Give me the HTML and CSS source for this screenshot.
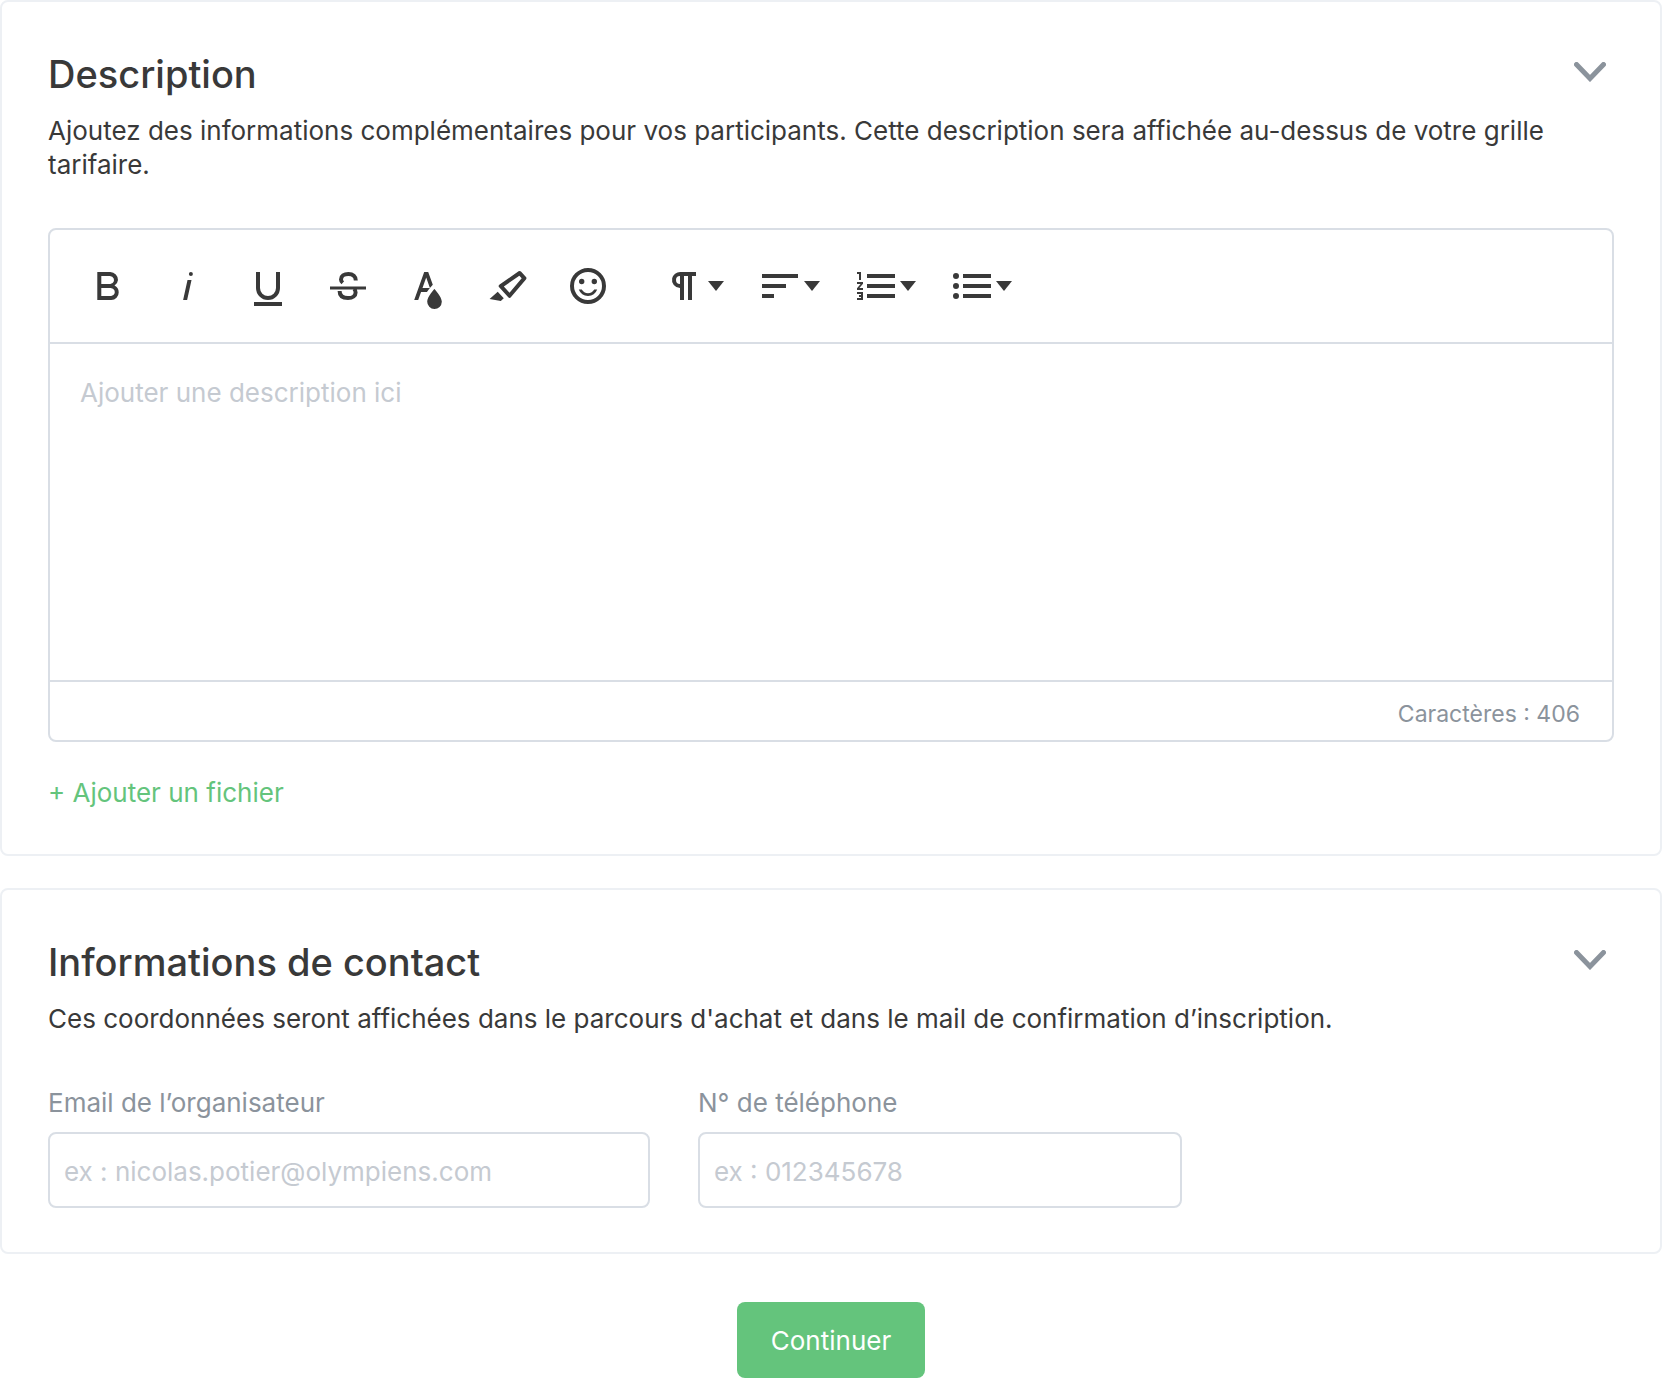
FILE: index.html
```html
<!DOCTYPE html>
<html lang="fr">
<head>
    <meta charset="UTF-8">
    <meta name="viewport" content="width=device-width, initial-scale=1.0">
    <title>Description et contact</title>
    <link rel="stylesheet" href="styles.css">
</head>
<body>
<form>
    <!-- Description -->
    <section class="card">
        <div class="card-header">
            <h2>Description</h2>
            <button type="button" class="toggle-btn" aria-label="Replier la description">
                <svg viewBox="0 0 32 20"><path d="M2.5 2.5 16 16.5 29.5 2.5"/></svg>
            </button>
        </div>
        <p class="intro">Ajoutez des informations complémentaires pour vos participants. Cette description sera affichée au-dessus de votre grille tarifaire.</p>

        <div class="editor">
            <div class="toolbar">
                <div class="btn-group">
                    <button type="button" aria-label="Gras">
                        <svg class="icon" viewBox="0 0 24 24"><path d="M15.25,11.8h0A3.68,3.68,0,0,0,17,9a3.93,3.93,0,0,0-3.86-4H6.65V19h7a3.74,3.74,0,0,0,3.7-3.78V15.1A3.64,3.64,0,0,0,15.25,11.8ZM8.65,7h4.2a2.09,2.09,0,0,1,2,1.3,2.09,2.09,0,0,1-1.37,2.61,2.23,2.23,0,0,1-.63.09H8.65Zm4.6,10H8.65V13h4.6a2.09,2.09,0,0,1,2,1.3,2.09,2.09,0,0,1-1.37,2.61A2.23,2.23,0,0,1,13.25,17Z"/></svg>
                    </button>
                    <button type="button" aria-label="Italique">
                        <svg class="icon" viewBox="0 0 24 24"><path d="M11.76,9h2l-2.2,10h-2Zm1.68-4a1,1,0,1,0,1,1,1,1,0,0,0-1-1Z"/></svg>
                    </button>
                    <button type="button" aria-label="Souligné">
                        <svg class="icon" viewBox="0 0 24 24"><path d="M5 20h14v2H5Z"/><path class="line" d="M7 5v8a5 5 0 0 0 10 0V5"/></svg>
                    </button>
                    <button type="button" aria-label="Barré">
                        <svg class="icon" viewBox="0 0 24 24"><path d="M3 12.2h18v1.5H3Z"/><path class="line" d="M9.4 10.4C8.7 9.8 8.5 9.2 8.5 8.7 8.5 7 10 6 12.2 6c2.3 0 3.7 1.3 3.7 3.3M7.8 14.5C7.8 16.8 9.4 18 12 18c2.4 0 3.8-1.1 3.8-2.8 0-.8-.2-1.4-.8-1.9"/></svg>
                    </button>
                    <button type="button" aria-label="Couleur du texte">
                        <svg class="icon" viewBox="0 0 24 24"><path d="M15.2,13.494s-3.6,3.9-3.6,6.3a3.65,3.65,0,0,0,7.3.1v-.1C18.9,17.394,15.2,13.494,15.2,13.494Zm-1.47-1.357.669-.724L12.1,5h-2l-5,14h2l1.43-4h2.943A24.426,24.426,0,0,1,13.726,12.137ZM11.1,7.8l1.86,5.2H9.244Z"/></svg>
                    </button>
                    <button type="button" aria-label="Couleur de fond">
                        <svg class="icon" viewBox="0 0 24 24"><path d="M9.918,12.241l7.748-5.39,1.179,1.296-6.094,7.207L9.918,12.241M7.587,12.652l4.536,4.983a.934.934,0,0,0,1.395-.091L20.969,8.731A.908.908,0,0,0,20.991,7.533l-2.513-2.761a.908.908,0,0,0-1.195-.091L7.809,11.271A.934.934,0,0,0,7.587,12.652ZM2.794,18.528,8.411,19.5l1.479-1.346-3.029-3.328Z"/></svg>
                    </button>
                    <button type="button" aria-label="Émoticônes">
                        <svg class="icon" viewBox="0 0 24 24"><path d="M11.991,3A9,9,0,1,0,21,12,8.996,8.996,0,0,0,11.991,3ZM12,19a7,7,0,1,1,7-7A6.998,6.998,0,0,1,12,19Zm3.105-5.2h1.503a4.945,4.945,0,0,1-9.216,0H8.895a3.578,3.578,0,0,0,6.21,0ZM7.5,9.75A1.35,1.35,0,1,1,8.85,11.1,1.35,1.35,0,0,1,7.5,9.75Zm6.3,0a1.35,1.35,0,1,1,1.35,1.35A1.35,1.35,0,0,1,13.8,9.75Z"/></svg>
                    </button>
                </div>
                <div class="btn-group">
                    <button type="button" class="dropdown" aria-label="Format de paragraphe">
                        <svg class="icon" viewBox="0 0 24 24"><path d="M10.15,5A4.11,4.11,0,0,0,6.08,8.18,4,4,0,0,0,10,13v6h2V7h2V19h2V7h2V5ZM8,9a2,2,0,0,1,2-2v4A2,2,0,0,1,8,9Z"/></svg>
                        <svg class="caret" viewBox="0 0 16 10"><path d="M0 0h16L8 10Z"/></svg>
                    </button>
                    <button type="button" class="dropdown" aria-label="Alignement">
                        <svg class="icon" viewBox="0 0 24 24"><path d="M3 6h18v2H3ZM3 11h12v2H3ZM3 16h6v2H3Z"/></svg>
                        <svg class="caret" viewBox="0 0 16 10"><path d="M0 0h16L8 10Z"/></svg>
                    </button>
                    <button type="button" class="dropdown" aria-label="Liste numérotée">
                        <svg class="icon" viewBox="0 0 24 24"><path d="M2.5,16h2v.5h-1v1h1V18h-2v1h3V15h-3Zm1-7h1V5h-2V6h1Zm-1,2H4.3L2.5,13.1V14h3V13H3.7l1.8-2.1V10h-3Zm5-5V8h14V6Zm0,12h14V16H7.5Zm0-5h14V11H7.5Z"/></svg>
                        <svg class="caret" viewBox="0 0 16 10"><path d="M0 0h16L8 10Z"/></svg>
                    </button>
                    <button type="button" class="dropdown" aria-label="Liste à puces">
                        <svg class="icon" viewBox="0 0 24 24"><path d="M4,10.5A1.5,1.5,0,1,0,5.5,12,1.5,1.5,0,0,0,4,10.5ZM4,5.5A1.5,1.5,0,1,0,5.5,7,1.5,1.5,0,0,0,4,5.5Zm0,10A1.5,1.5,0,1,0,5.5,17,1.5,1.5,0,0,0,4,15.5ZM7.5,6V8h14V6Zm0,12h14V16H7.5Zm0-5h14V11H7.5Z"/></svg>
                        <svg class="caret" viewBox="0 0 16 10"><path d="M0 0h16L8 10Z"/></svg>
                    </button>
                </div>
            </div>
            <textarea aria-label="Description" placeholder="Ajouter une description ici"></textarea>
            <div class="counter">Caractères : 406</div>
        </div>

        <a class="add-file" href="#">+ Ajouter un fichier</a>
    </section>

    <!-- Contact -->
    <section class="card">
        <div class="card-header">
            <h2>Informations de contact</h2>
            <button type="button" class="toggle-btn" aria-label="Replier les informations de contact">
                <svg viewBox="0 0 32 20"><path d="M2.5 2.5 16 16.5 29.5 2.5"/></svg>
            </button>
        </div>
        <p class="intro">Ces coordonnées seront affichées dans le parcours d'achat et dans le mail de confirmation d’inscription.</p>

        <div class="fields">
            <div class="field field-email">
                <label for="email">Email de l’organisateur</label>
                <input type="email" id="email" placeholder="ex : nicolas.potier@olympiens.com">
            </div>
            <div class="field field-phone">
                <label for="phone">N° de téléphone</label>
                <input type="tel" id="phone" placeholder="ex : 012345678">
            </div>
        </div>
    </section>

    <div class="form-actions">
        <button type="submit" class="submit-btn">Continuer</button>
    </div>
</form>
</body>
</html>
```
FILE: styles.css
```css
* {
    box-sizing: border-box;
}

body {
    margin: 0;
    font-family: Inter, "Liberation Sans", sans-serif;
    font-size: 26px;
    line-height: 34px;
    color: #393939;
    background-color: #fff;
}

button, input, textarea {
    font: inherit;
    color: inherit;
}

button {
    padding: 0;
    border: none;
    background: none;
    cursor: pointer;
}

svg {
    display: block;
}

/* Cards */
.card {
    padding: 46px 46px 44px;
    border: 2px solid #edf0f4;
    border-radius: 8px;
    margin-bottom: 32px;
}

.card-header {
    display: flex;
    justify-content: space-between;
    align-items: flex-start;
}

h2 {
    margin: 0;
    font-size: 38px;
    font-weight: 500;
    line-height: 52px;
}

.toggle-btn {
    padding: 14px 8px;
}

.toggle-btn svg {
    width: 32px;
    height: 20px;
    fill: none;
    stroke: #8b939c;
    stroke-width: 5;
    stroke-linecap: round;
}

.intro {
    margin: 14px 0 46px;
}

/* Editor */
.editor {
    border: 2px solid #d9dee5;
    border-radius: 8px;
    overflow: hidden;
}

.toolbar {
    display: flex;
    flex-wrap: wrap;
    gap: 16px;
    padding: 18px;
    border-bottom: 2px solid #d9dee5;
}

.btn-group {
    display: flex;
}

.btn-group button {
    display: flex;
    align-items: center;
    height: 76px;
    padding: 0 14px;
    margin: 0 2px;
    border-radius: 8px;
}

.btn-group button:hover {
    background-color: #edf0f4;
}

.icon {
    width: 48px;
    height: 48px;
    fill: #393939;
}

.icon .line {
    fill: none;
    stroke: #393939;
    stroke-width: 2;
}

.caret {
    width: 16px;
    height: 10px;
    fill: #393939;
}

textarea {
    display: block;
    width: 100%;
    height: 336px;
    padding: 32px 30px;
    border: none;
    outline: none;
    resize: none;
    background: none;
}

::placeholder {
    color: #c5cad1;
    opacity: 1;
}

.counter {
    padding: 14px 32px 8px;
    border-top: 2px solid #d9dee5;
    font-size: 23px;
    line-height: 36px;
    color: #8b939c;
    text-align: right;
}

.add-file {
    display: inline-block;
    margin-top: 34px;
    color: #64c47c;
    text-decoration: none;
}

/* Contact fields */
.fields {
    display: flex;
    flex-wrap: wrap;
    gap: 48px;
    padding-top: 4px;
}

.field {
    display: flex;
    flex-direction: column;
    gap: 12px;
}

.field-email {
    width: 602px;
}

.field-phone {
    width: 484px;
}

label {
    color: #8b939c;
}

.field input {
    width: 100%;
    height: 76px;
    padding: 2px 14px 0;
    border: 2px solid #d9dee5;
    border-radius: 8px;
    outline: none;
    background: none;
}

.field input:focus {
    border-color: #64c47c;
}

/* Submit */
.form-actions {
    display: flex;
    justify-content: center;
    margin-top: 48px;
}

.submit-btn {
    padding: 22px 34px 20px;
    border-radius: 8px;
    color: #fff;
    background-color: #64c47c;
}

.submit-btn:hover {
    background-color: #54b46c;
}
```
